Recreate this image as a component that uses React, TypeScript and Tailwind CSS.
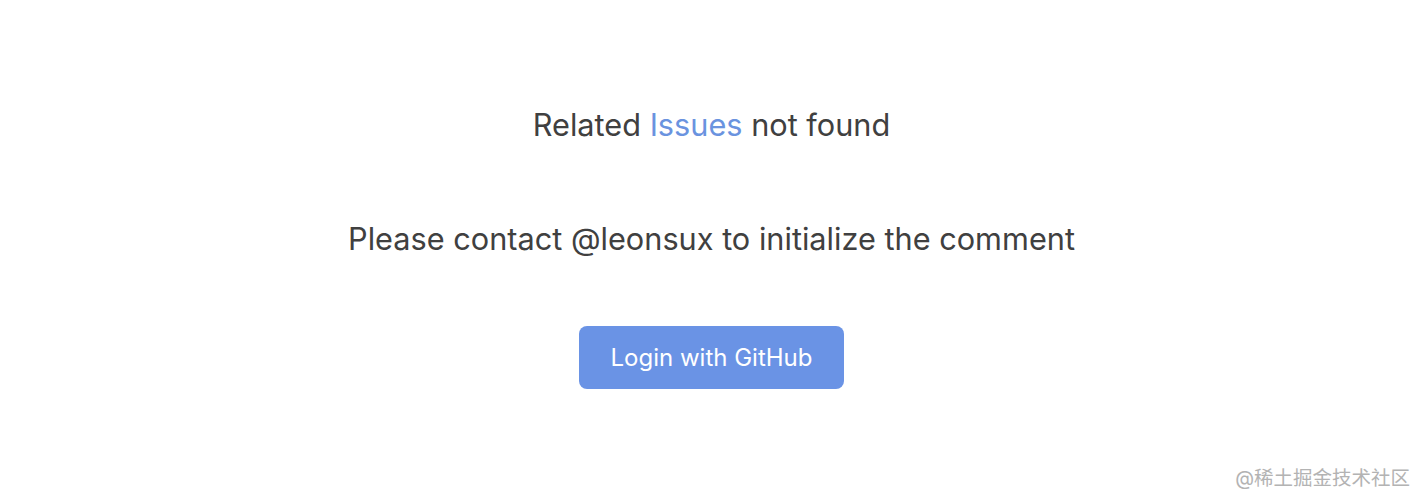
export default function App() {
  return (
    <div className="relative h-[504px] w-[1426px] bg-white font-['Inter','Noto_Sans_CJK_SC',sans-serif] text-[#404040]">
      <div className="flex flex-col items-center pt-[104px] pr-[3px]">
        <p className="text-[30.7px] leading-[42px]">
          Related <span className="text-[#6a93df]">Issues</span> not found
        </p>
        <p className="mt-[72px] text-[30.7px] leading-[42px]">
          Please contact @leonsux to initialize the comment
        </p>
        <button className="mt-[66px] flex h-[63px] w-[265px] items-center justify-center rounded-[8px] bg-[#6a93e5] text-[24px] text-white">
          Login with GitHub
        </button>
      </div>
      <div className="absolute bottom-[14px] right-[16px] text-[19.5px] leading-[24px] text-[#b3b3b3]">
        @稀土掘金技术社区
      </div>
    </div>
  );
}
